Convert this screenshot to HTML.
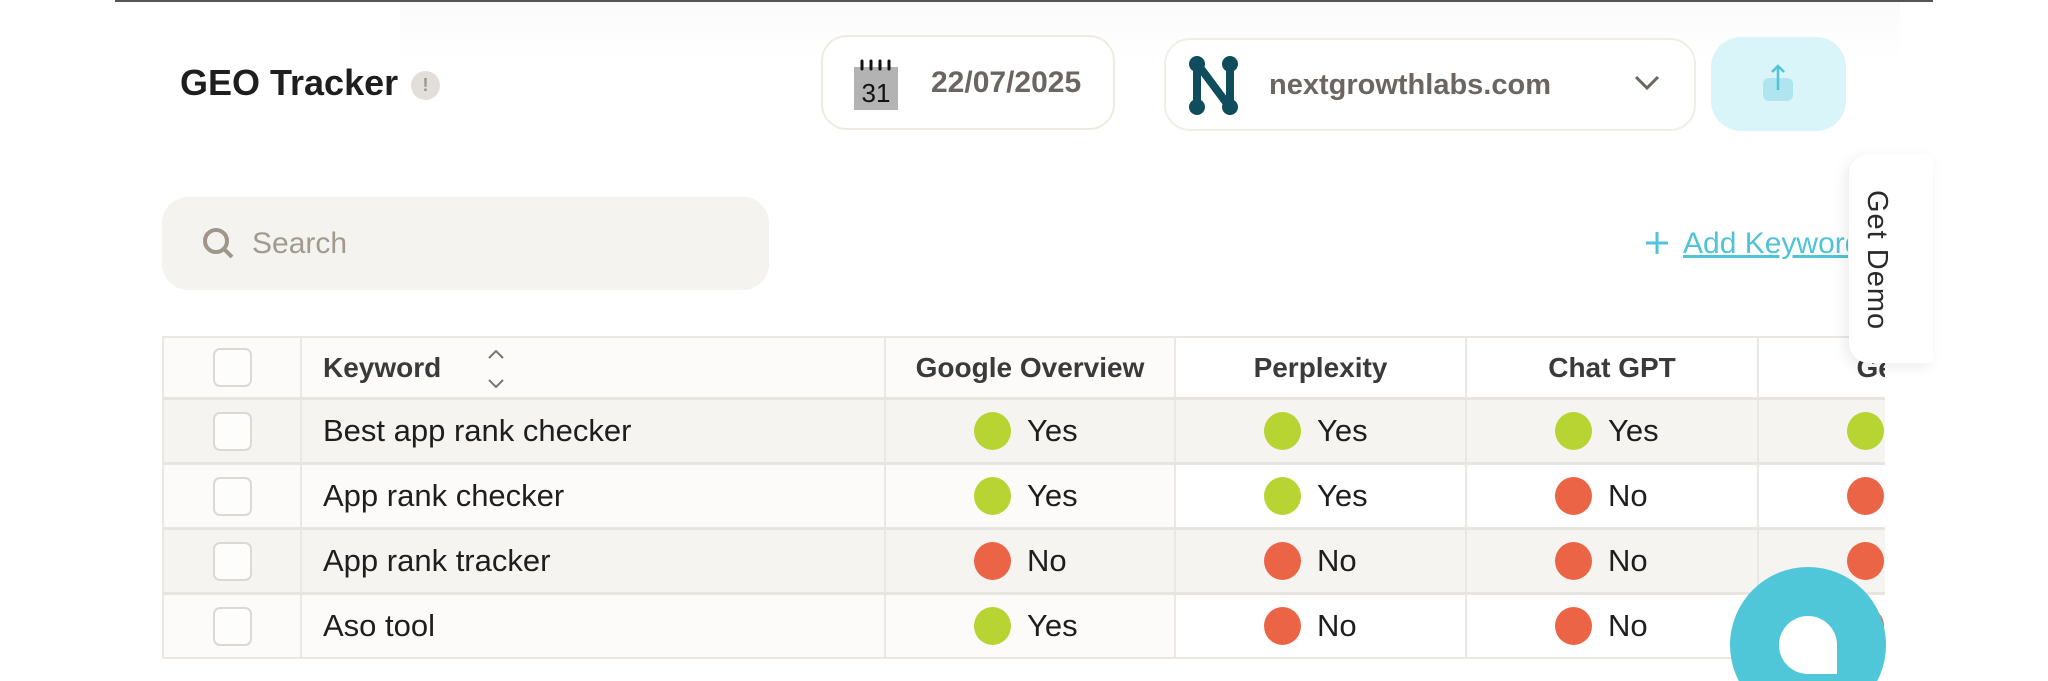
<!DOCTYPE html>
<html style="width:2048px;height:681px;overflow:hidden"><head><meta charset="utf-8"><style>
*{margin:0;padding:0;box-sizing:border-box}
body{width:2048px;height:681px;overflow:hidden;background:#fff;font-family:"Liberation Sans",sans-serif;position:relative}
.abs{position:absolute}
.topline{left:115px;top:0;width:1818px;height:2px;background:#555}
.title{left:180px;top:62px;font-size:36px;font-weight:bold;color:#1e1e1e}
.info{left:411px;top:71px;width:29px;height:29px;border-radius:50%;background:#e2dfdb;color:#9a958e;font-size:18px;text-align:center;line-height:29px;font-weight:bold}
.box{border:2px solid #efebe3;border-radius:26px;background:#fff}
.date{left:821px;top:35px;width:294px;height:95px}
.dtxt{left:931px;top:66px;font-size:30px;font-weight:bold;color:#6b6661}
.dom{left:1164px;top:38px;width:532px;height:93px;border-color:#f1eee8}
.domtxt{left:1269px;top:69px;font-size:29px;font-weight:bold;color:#6b6661}
.up{left:1711px;top:37px;width:135px;height:94px;border-radius:30px;background:#daf5f9}
.search{left:162px;top:197px;width:607px;height:93px;border-radius:26px;background:#f5f3ef}
.stxt{left:252px;top:227px;font-size:30px;color:#a09a8f}
.clipadd{left:1640px;top:215px;width:208px;height:60px;overflow:hidden}
.demo{left:1849px;top:154px;width:84px;height:209px;background:#fff;border-radius:20px 0 0 20px;box-shadow:-4px 4px 14px rgba(0,0,0,0.08)}
.demotxt{left:1860px;top:190px;font-size:29px;color:#2a2a2a;writing-mode:vertical-rl;letter-spacing:1px}
.table{left:162px;top:336px;width:1723px;height:323px;overflow:hidden;border:2px solid #ebe8e3;border-right:none}
.row{position:absolute;left:0;width:1800px;height:65px;border-bottom:3px solid #e8e5e0}
.cell{position:absolute;top:0;height:100%;border-right:2px solid #ebe8e3;display:flex;align-items:center}
.cb{width:39px;height:39px;border:2px solid #dcd9d4;border-radius:7px;background:#fdfdfc;margin-left:49px}
.kw{padding-left:21px;font-size:31px;color:#1e1e1e}
.hd{font-size:28px;font-weight:bold;color:#3a3a3a;justify-content:center}
.st{justify-content:flex-start;padding-left:88px;font-size:31px;color:#1e1e1e}
.dot{width:37px;height:38px;border-radius:50%;margin-right:16px}
.g{background:#b7d433}.r{background:#ec6446}
</style></head><body>
<div class="abs" style="left:400px;top:0;width:1500px;height:60px;background:linear-gradient(#fafafa,#fff)"></div>
<div class="abs topline"></div>
<div class="abs title">GEO Tracker</div>
<div class="abs info">!</div>

<div class="abs box date"></div>
<svg class="abs" style="left:851px;top:58px" width="50" height="52" viewBox="0 0 50 52">
<rect x="3" y="9" width="44" height="43" fill="#b3b3b3"/>
<g stroke="#111" stroke-width="3" stroke-linecap="round"><line x1="11" y1="3" x2="11" y2="11"/><line x1="20" y1="3" x2="20" y2="11"/><line x1="29" y1="3" x2="29" y2="11"/><line x1="38" y1="3" x2="38" y2="11"/></g>
<text x="25" y="44" text-anchor="middle" font-family="Liberation Sans" font-size="26" fill="#111">31</text>
</svg>
<div class="abs dtxt">22/07/2025</div>

<div class="abs box dom"></div>
<svg class="abs" style="left:1186px;top:52px" width="56" height="66" viewBox="0 0 56 66">
<g fill="#0f4c5c"><circle cx="11" cy="12" r="8"/><circle cx="44" cy="12" r="8"/><circle cx="11" cy="55" r="8"/><circle cx="44" cy="55" r="8"/></g>
<g stroke="#0f4c5c" stroke-width="8" stroke-linecap="round"><line x1="11" y1="12" x2="11" y2="55"/><line x1="44" y1="12" x2="44" y2="55"/><line x1="13" y1="14" x2="42" y2="53"/></g>
</svg>
<div class="abs domtxt">nextgrowthlabs.com</div>
<svg class="abs" style="left:1633px;top:74px" width="28" height="18" viewBox="0 0 28 18"><path d="M3 3 L14 14 L25 3" fill="none" stroke="#6b6661" stroke-width="3"/></svg>

<div class="abs up"></div>
<svg class="abs" style="left:1760px;top:62px" width="36" height="40" viewBox="0 0 36 40">
<rect x="3" y="16" width="30" height="23" rx="6" fill="#aee5ef"/>
<path d="M18 28 V4 M12 10 L18 4 L24 10" fill="none" stroke="#4fc3d8" stroke-width="2.5"/>
</svg>

<div class="abs search"></div>
<svg class="abs" style="left:201px;top:226px" width="36" height="36" viewBox="0 0 36 36"><circle cx="15" cy="15" r="11" fill="none" stroke="#9d9689" stroke-width="4"/><line x1="23" y1="23" x2="31" y2="31" stroke="#9d9689" stroke-width="4"/></svg>
<div class="abs stxt">Search</div>

<div class="abs clipadd"><svg style="position:absolute;left:4px;top:15px" width="26" height="26" viewBox="0 0 26 26"><path d="M13 2 V24 M2 13 H24" stroke="#4fc3d8" stroke-width="3"/></svg><div style="position:absolute;left:43px;top:12px;font-size:30px;color:#4fc3d8;text-decoration:underline;white-space:nowrap">Add Keyword</div></div>

<div class="abs table">
 <div class="row" style="top:0;height:62px;background:#fff">
  <div class="cell" style="left:0;width:138px;background:#fcfbf9"><div class="cb"></div></div>
  <div class="cell" style="left:138px;width:584px;background:#fcfbf9"><span class="kw" style="font-weight:bold;font-size:28px;color:#3a3a3a">Keyword</span>
  <svg style="position:absolute;left:182px;top:8px" width="24" height="46" viewBox="0 0 24 46"><path d="M5 12 L12 5 L19 12 M5 34 L12 41 L19 34" fill="none" stroke="#7a756d" stroke-width="2"/></svg></div>
  <div class="cell hd" style="left:722px;width:290px;background:#fcfbf9">Google Overview</div>
  <div class="cell hd" style="left:1012px;width:291px">Perplexity</div>
  <div class="cell hd" style="left:1303px;width:292px">Chat GPT</div>
  <div class="cell hd" style="left:1595px;width:292px">Gemini</div>
 </div>
 <div class="row" style="top:62px;background:#f5f4f0">
  <div class="cell" style="left:0;width:138px"><div class="cb"></div></div>
  <div class="cell kw" style="left:138px;width:584px">Best app rank checker</div>
  <div class="cell st" style="left:722px;width:290px"><div class="dot g"></div>Yes</div>
  <div class="cell st" style="left:1012px;width:291px"><div class="dot g"></div>Yes</div>
  <div class="cell st" style="left:1303px;width:292px"><div class="dot g"></div>Yes</div>
  <div class="cell st" style="left:1595px;width:292px"><div class="dot g"></div>Yes</div>
 </div>
 <div class="row" style="top:127px;background:#fff">
  <div class="cell" style="left:0;width:138px;background:#fcfbf9"><div class="cb"></div></div>
  <div class="cell kw" style="left:138px;width:584px;background:#fcfbf9">App rank checker</div>
  <div class="cell st" style="left:722px;width:290px;background:#fcfbf9"><div class="dot g"></div>Yes</div>
  <div class="cell st" style="left:1012px;width:291px"><div class="dot g"></div>Yes</div>
  <div class="cell st" style="left:1303px;width:292px"><div class="dot r"></div>No</div>
  <div class="cell st" style="left:1595px;width:292px"><div class="dot r"></div>No</div>
 </div>
 <div class="row" style="top:192px;background:#f5f4f0">
  <div class="cell" style="left:0;width:138px"><div class="cb"></div></div>
  <div class="cell kw" style="left:138px;width:584px">App rank tracker</div>
  <div class="cell st" style="left:722px;width:290px"><div class="dot r"></div>No</div>
  <div class="cell st" style="left:1012px;width:291px"><div class="dot r"></div>No</div>
  <div class="cell st" style="left:1303px;width:292px"><div class="dot r"></div>No</div>
  <div class="cell st" style="left:1595px;width:292px"><div class="dot r"></div>No</div>
 </div>
 <div class="row" style="top:257px;background:#fff">
  <div class="cell" style="left:0;width:138px;background:#fcfbf9"><div class="cb"></div></div>
  <div class="cell kw" style="left:138px;width:584px;background:#fcfbf9">Aso tool</div>
  <div class="cell st" style="left:722px;width:290px;background:#fcfbf9"><div class="dot g"></div>Yes</div>
  <div class="cell st" style="left:1012px;width:291px"><div class="dot r"></div>No</div>
  <div class="cell st" style="left:1303px;width:292px"><div class="dot r"></div>No</div>
  <div class="cell st" style="left:1595px;width:292px"><div class="dot r"></div>No</div>
 </div>
</div>

<div class="abs demo"></div>
<div class="abs demotxt">Get Demo</div>

<div class="abs" style="left:1730px;top:567px;width:156px;height:114px;overflow:hidden"><div style="width:156px;height:156px;border-radius:50%;background:#4fc7d9"></div></div>
<div class="abs" style="left:1779px;top:616px;width:58px;height:58px;background:#fff;border-radius:29px 29px 0 29px"></div>
</body></html>
